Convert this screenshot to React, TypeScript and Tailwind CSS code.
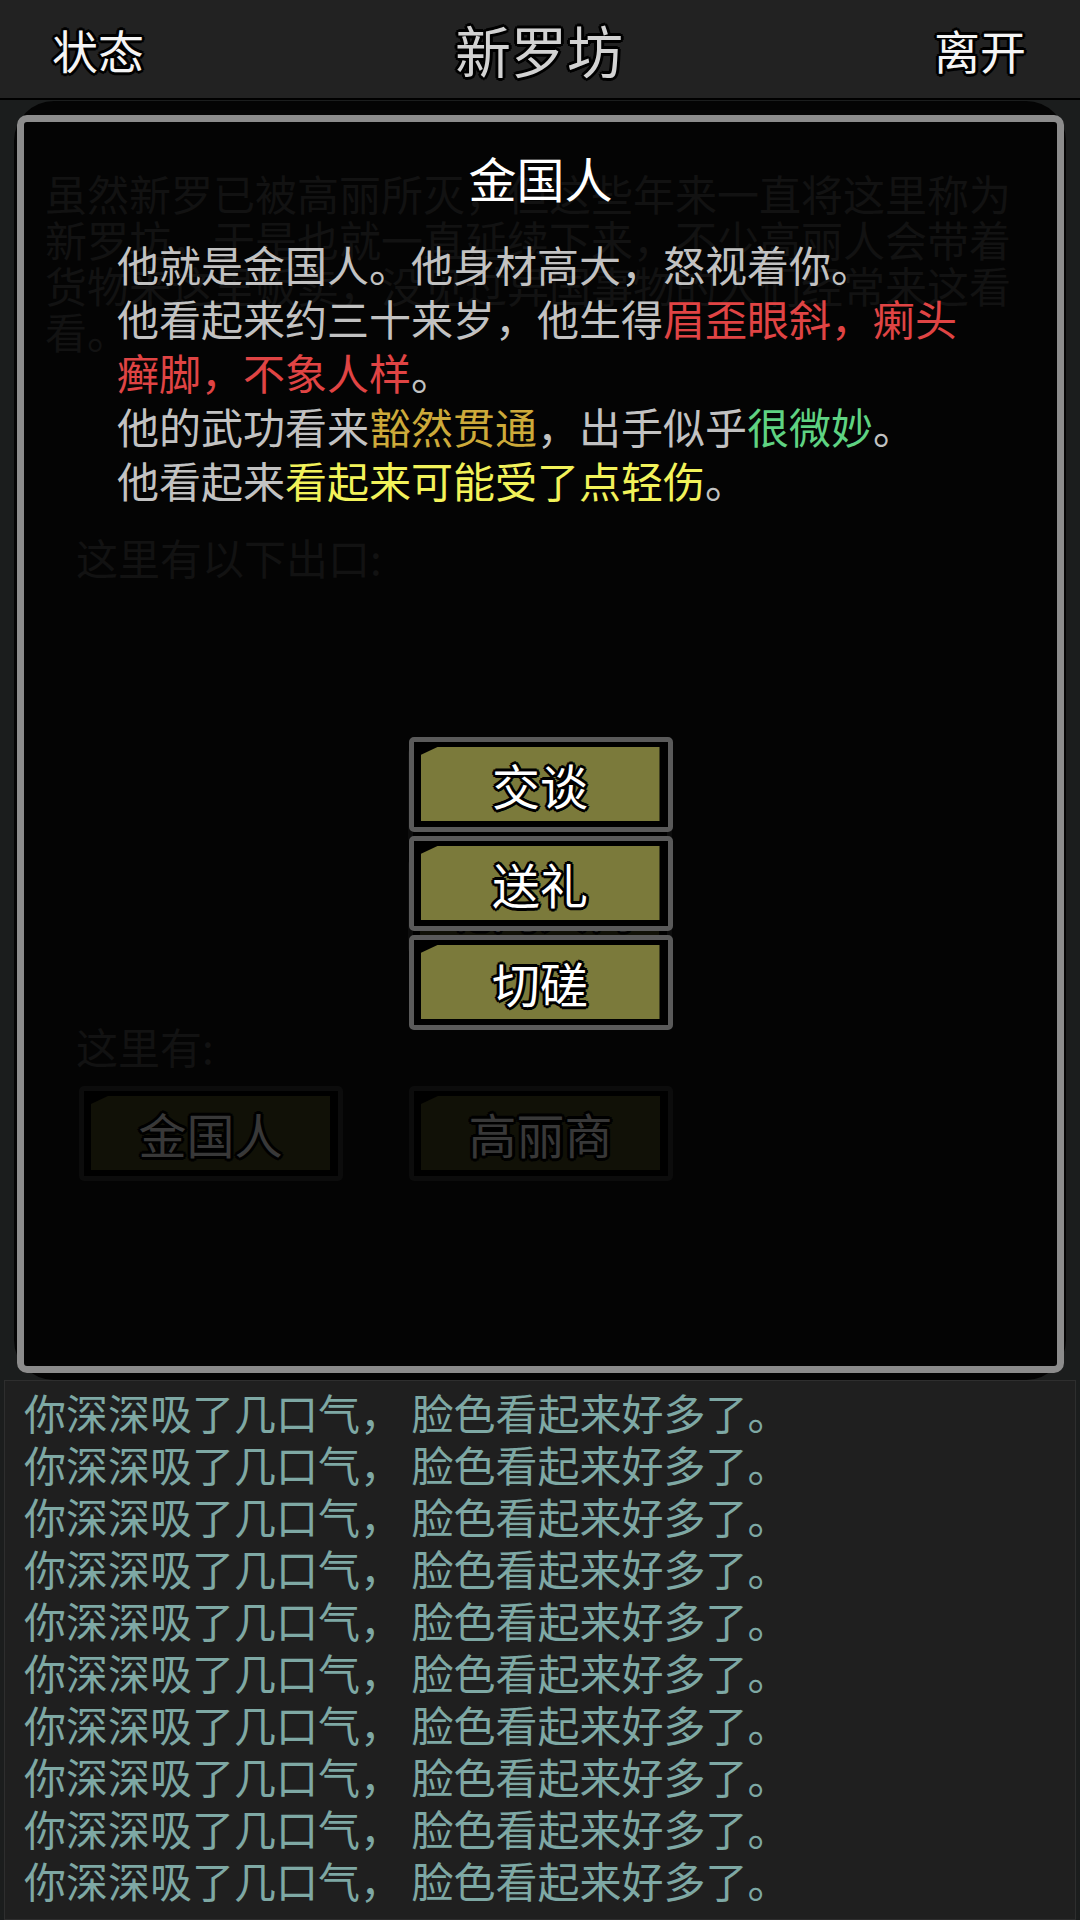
const font = "font-['Noto_Sans_CJK_SC','Noto_Sans',sans-serif]"

// black outline round light text
const outline =
  '[text-shadow:-2px_-2px_0_#000,2px_-2px_0_#000,-2px_2px_0_#000,2px_2px_0_#000,0_-3px_0_#000,0_3px_0_#000,-3px_0_0_#000,3px_0_0_#000]'

const backdrop = [
  '虽然新罗已被高丽所灭，但这些年来一直将这里称为',
  '新罗坊，于是也就一直延续下来，不少高丽人会带着',
  '货物来这里贩卖，没见过异国事物的人们经常来这看',
  '看。',
]

function GameButton({ label, dim = false }: { label: string; dim?: boolean }) {
  return (
    <div
      className={
        dim
          ? 'h-[95px] w-[264px] rounded-[5px] border-[5px] border-[#0c0c0c] bg-black pt-[5px] pr-[8px] pb-[6px] pl-[7px]'
          : 'h-[95px] w-[264px] rounded-[5px] border-[5px] border-[#5a5a5a] bg-black pt-[5px] pr-[8px] pb-[6px] pl-[7px]'
      }
    >
      <div
        className={
          dim
            ? 'flex h-full items-center justify-center bg-[#111107] [clip-path:polygon(17px_0,100%_0,100%_100%,0_100%,0_8px)]'
            : 'flex h-full items-center justify-center bg-[#7b7a3b] [clip-path:polygon(17px_0,100%_0,100%_100%,0_100%,0_8px)]'
        }
      >
        <span
          className={
            dim
              ? `text-[48px] leading-none text-[#383838] ${outline}`
              : `text-[48px] leading-none text-white ${outline}`
          }
        >
          {label}
        </span>
      </div>
    </div>
  )
}

function Header() {
  return (
    <div className="flex h-[100px] shrink-0 items-center justify-between border-b-2 border-black bg-[#222222] pr-[54px] pl-[52px]">
      <span className={`text-[46px] leading-none text-[#f4f4f4] ${outline}`}>状态</span>
      <span className={`text-[56px] leading-none text-[#d2d2d2] ${outline}`}>新罗坊</span>
      <span className={`text-[46px] leading-none text-[#f4f4f4] ${outline}`}>离开</span>
    </div>
  )
}

function Backdrop() {
  return (
    <div className="mx-[14px] mt-px h-[1279px] rounded-[40px] bg-[#040404] pl-[31px] text-[42px] text-[#121212]">
      <div className="pt-[69px] leading-[46px]">
        {backdrop.map((line, i) => (
          <div key={i}>{line}</div>
        ))}
      </div>
      <div className="mt-[180px] pl-[31px] leading-[46px]">这里有以下出口:</div>
      <div className="mt-[168px] flex flex-col items-center gap-[16px] pr-[31px]">
        <GameButton label="东大街" dim />
        <GameButton label="北内大街" dim />
      </div>
      <div className="mt-[69px] pl-[31px] leading-[46px]">这里有:</div>
      <div className="mt-[17px] flex gap-[66px] pl-[34px]">
        <GameButton label="金国人" dim />
        <GameButton label="高丽商" dim />
      </div>
    </div>
  )
}

function NpcDialog() {
  return (
    <div className="absolute top-[15px] left-[17px] flex h-[1258px] w-[1047px] flex-col items-center rounded-[10px] border-[7px] border-[#8c8c8c]">
      <div className="mt-[25px] text-[48px] leading-[60px] text-white">金国人</div>
      <div className="mt-[30px] w-full pl-[93px] text-[42px] leading-[54px] text-[#c2c2c2]">
        <div>他就是金国人。他身材高大，怒视着你。</div>
        <div>
          他看起来约三十来岁，他生得<span className="text-[#e04444]">眉歪眼斜，瘌头</span>
        </div>
        <div>
          <span className="text-[#e04444]">癣脚，不象人样</span>。
        </div>
        <div>
          他的武功看来<span className="text-[#cdaa3a]">豁然贯通</span>，出手似乎
          <span className="text-[#5fd382]">很微妙</span>。
        </div>
        <div>
          他看起来<span className="text-[#f2f25a]">看起来可能受了点轻伤</span>。
        </div>
      </div>
      <div className="mt-[230px] flex flex-col gap-[4px]">
        <GameButton label="交谈" />
        <GameButton label="送礼" />
        <GameButton label="切磋" />
      </div>
    </div>
  )
}

function MessageLog() {
  const lines = Array.from({ length: 10 }, () => '你深深吸了几口气， 脸色看起来好多了。')
  return (
    <div className="mx-[4px] flex-1 border border-[#2e2e2e] bg-[#1f1f1f] pt-[5px] pl-[19px] text-[42px] leading-[52px] text-[#7ea8a4]">
      {lines.map((line, i) => (
        <div key={i}>{line}</div>
      ))}
    </div>
  )
}

export default function App() {
  return (
    <div className={`flex h-[1920px] w-[1080px] flex-col overflow-hidden bg-[#1b1d1d] ${font}`}>
      <Header />
      <div className="relative h-[1280px] shrink-0">
        <Backdrop />
        <NpcDialog />
      </div>
      <MessageLog />
    </div>
  )
}
